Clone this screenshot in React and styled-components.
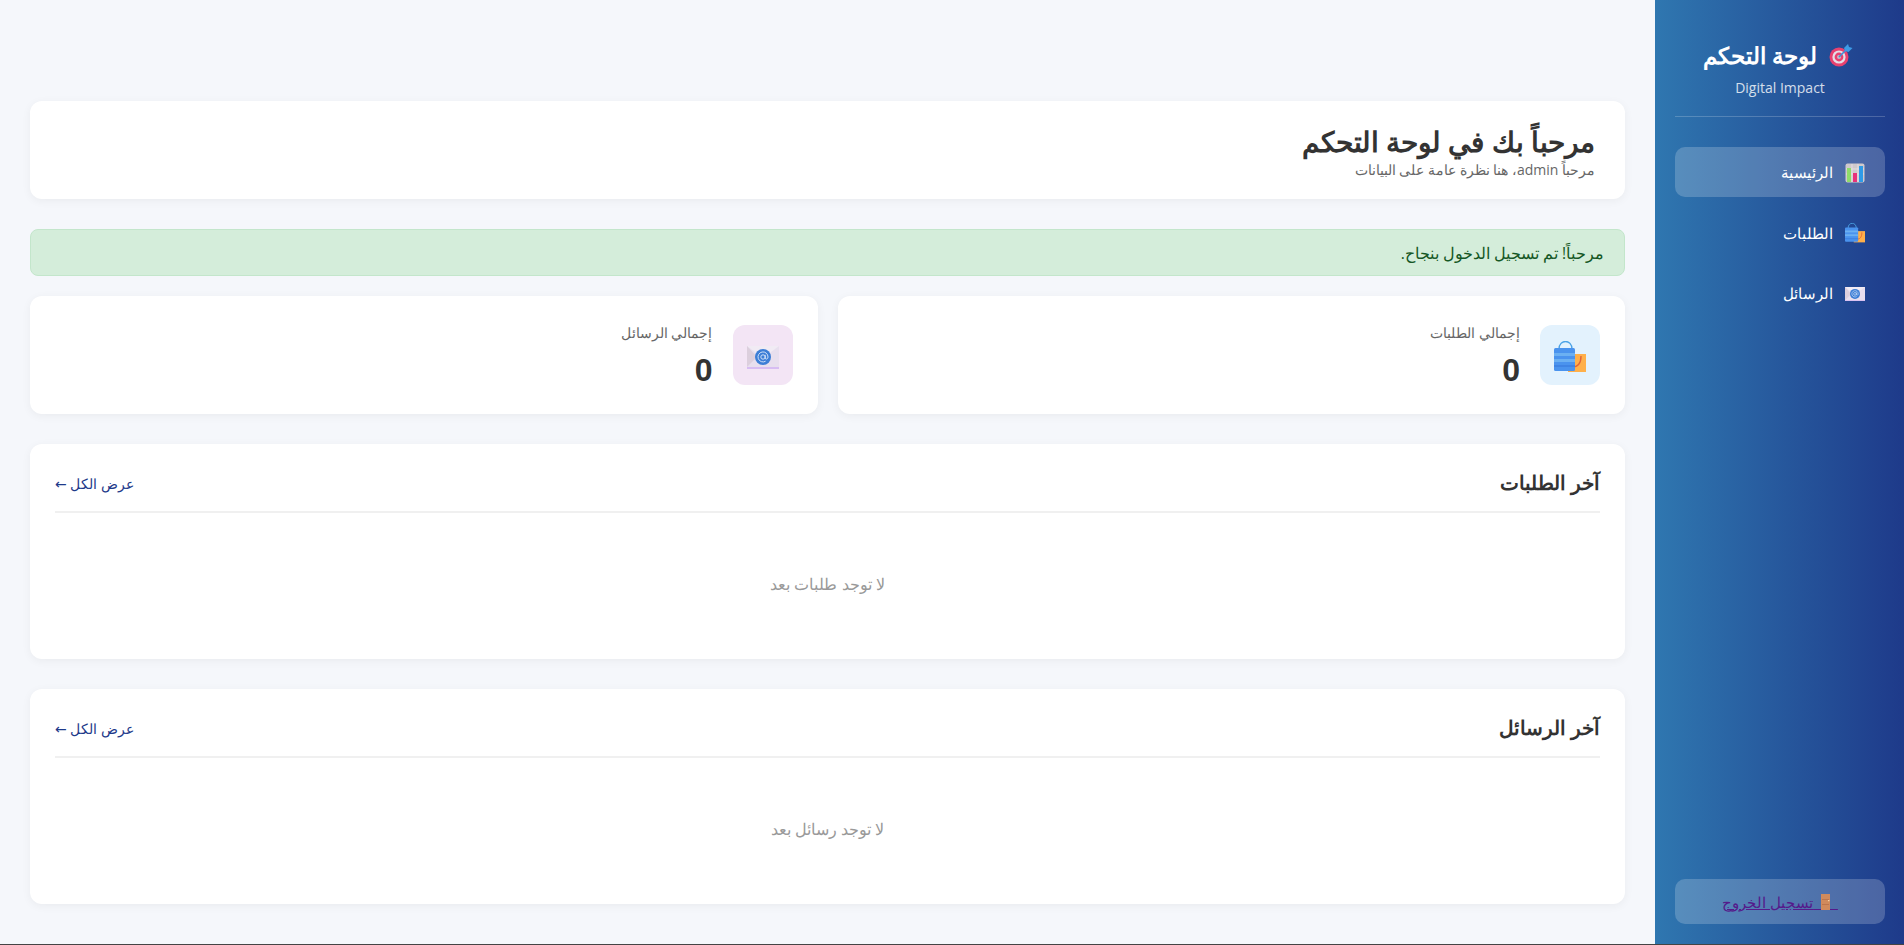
import styled, { createGlobalStyle } from "styled-components";

const GlobalStyle = createGlobalStyle`
  * {
    box-sizing: border-box;
    margin: 0;
    padding: 0;
  }
  body {
    background: #f5f7fb;
    font-family: "Open Sans", sans-serif;
    color: #333;
  }
`;

function TargetIcon({ size = 24 }) {
  return (
    <svg width={size} height={size} viewBox="0 0 24 24">
      <circle cx="10" cy="14" r="9.5" fill="#e8416f" />
      <circle cx="10" cy="14" r="6.6" fill="#e3dfe6" />
      <circle cx="10" cy="14" r="4.4" fill="#e8416f" />
      <circle cx="10" cy="14" r="2" fill="#c9b9c4" />
      <path d="M10 14 L19 5" stroke="#3d8fd8" strokeWidth="1.6" />
      <path d="M15 5 L19 1 L20 4 L23.5 5 L19.5 9 L16 8 Z" fill="#3d9be6" />
    </svg>
  );
}

function ChartIcon({ size = 20 }) {
  return (
    <svg width={size} height={size} viewBox="0 0 20 20">
      <rect x="0.5" y="0.5" width="19" height="19" rx="2" fill="#cfc9cc" />
      <path d="M7 1V19M13 1V19M1 6H19M1 11H19" stroke="#e7e4e6" strokeWidth="0.8" />
      <rect x="2" y="5" width="4" height="14" fill="#8fdc6a" />
      <rect x="8" y="10" width="4" height="9" fill="#e8327a" />
      <rect x="14" y="3" width="4" height="16" fill="#2f9be8" />
    </svg>
  );
}

function BagsIcon({ size = 20 }) {
  return (
    <svg width={size} height={size} viewBox="0 0 32 32">
      <rect x="14" y="13" width="18" height="18" fill="#ffb04a" />
      <path d="M18 26 C24 26 27 23 27 15" stroke="#e0653a" strokeWidth="1.4" fill="none" />
      <path d="M5 8 C5 -2 18 -2 18 8" stroke="#4ca3e6" strokeWidth="1.4" fill="none" />
      <rect x="0" y="7" width="21" height="23" rx="1.5" fill="#4a93ee" />
      <rect x="0" y="12" width="21" height="3" fill="#6bb0f2" />
      <rect x="0" y="18" width="21" height="3" fill="#6bb0f2" />
      <rect x="0" y="24" width="21" height="2" fill="#3f84e4" />
    </svg>
  );
}

function MailIcon({ size = 20 }) {
  return (
    <svg width={size} height={(size * 23) / 32} viewBox="0 0 32 23">
      <rect x="0" y="0" width="32" height="23" fill="#e8dfee" />
      <path d="M0 0 L16 12 L32 0 Z" fill="#f1ebf4" />
      <path d="M0 0 L10 11 L0 21 Z" fill="#dccfdd" />
      <rect x="0" y="21" width="32" height="2" fill="#d7bdf2" />
      <circle cx="16" cy="11" r="8" fill="#3c7ed6" />
      <circle cx="16" cy="11" r="2.2" fill="none" stroke="#dfeafa" strokeWidth="0.9" />
      <path
        d="M18.2 8.8 V12 C18.2 13.6 21 13.6 21 11 A5 5 0 1 0 18.6 15.2"
        fill="none"
        stroke="#dfeafa"
        strokeWidth="0.9"
      />
    </svg>
  );
}

function DoorIcon() {
  return (
    <DoorSvg width="9" height="16" viewBox="0 0 9 16">
      <rect width="9" height="16" fill="#d08a5c" />
      <path d="M1 5.5H8M1 10.5H8" stroke="#b87048" strokeWidth="0.8" />
      <rect x="7" y="6" width="1.4" height="1.2" fill="#f4d6a8" />
    </DoorSvg>
  );
}

const navItems = [
  { label: "الرئيسية", icon: <ChartIcon />, active: true },
  { label: "الطلبات", icon: <BagsIcon /> },
  { label: "الرسائل", icon: <MailIcon /> },
];

const stats = [
  { label: "إجمالي الطلبات", value: 0, icon: <BagsIcon size={32} />, tint: "#e3f2fd" },
  { label: "إجمالي الرسائل", value: 0, icon: <MailIcon size={32} />, tint: "#f3e5f5" },
];

const sections = [
  { title: "آخر الطلبات", empty: "لا توجد طلبات بعد" },
  { title: "آخر الرسائل", empty: "لا توجد رسائل بعد" },
];

export default function App() {
  return (
    <>
      <GlobalStyle />
      <Shell dir="rtl">
        <Sidebar>
          <Brand>
            <BrandTitle>
              <TargetIcon />
              <span>لوحة التحكم</span>
            </BrandTitle>
            <BrandSub>Digital Impact</BrandSub>
          </Brand>
          <Nav>
            {navItems.map((item) => (
              <NavItem key={item.label} $active={item.active}>
                <NavIcon>{item.icon}</NavIcon>
                {item.label}
              </NavItem>
            ))}
          </Nav>
          <LogoutBox>
            <LogoutLink href="#logout">
              {"\u00A0\u00A0"}
              <DoorIcon />
              {"\u00A0\u00A0"}تسجيل الخروج
            </LogoutLink>
          </LogoutBox>
        </Sidebar>
        <Main>
          <HeaderCard>
            <PageTitle>مرحباً بك في لوحة التحكم</PageTitle>
            <PageSub>مرحباً admin، هنا نظرة عامة على البيانات</PageSub>
          </HeaderCard>
          <Alert>مرحباً! تم تسجيل الدخول بنجاح.</Alert>
          <StatsGrid>
            {stats.map((s) => (
              <StatCard key={s.label}>
                <StatIcon $tint={s.tint}>{s.icon}</StatIcon>
                <StatText>
                  <StatLabel>{s.label}</StatLabel>
                  <StatValue>{s.value}</StatValue>
                </StatText>
              </StatCard>
            ))}
          </StatsGrid>
          {sections.map((s) => (
            <Section key={s.title}>
              <SectionHead>
                <SectionTitle>{s.title}</SectionTitle>
                <ViewAll>
                  عرض الكل <Arrow>←</Arrow>
                </ViewAll>
              </SectionHead>
              <Empty>{s.empty}</Empty>
            </Section>
          ))}
        </Main>
      </Shell>
      <BottomEdge />
    </>
  );
}

const Shell = styled.div`
  display: flex;
  height: 944px;
  overflow: hidden;
`;

const Sidebar = styled.aside`
  width: 249px;
  flex: none;
  display: flex;
  flex-direction: column;
  padding: 0 19px 20px 20px;
  background: linear-gradient(90deg, #2f77b0 0%, #1e3a8a 100%);
  color: #fff;
`;

const Brand = styled.div`
  height: 117px;
  padding-top: 39px;
  text-align: center;
  border-bottom: 1px solid rgba(255, 255, 255, 0.2);
`;

const BrandTitle = styled.h2`
  display: flex;
  justify-content: center;
  align-items: center;
  gap: 12px;
  height: 32px;
  padding-right: 4px;
  font-size: 23.2px;
  font-weight: 700;
`;

const BrandSub = styled.p`
  margin-top: 7px;
  font-size: 14px;
  line-height: 19px;
  opacity: 0.8;
`;

const Nav = styled.nav`
  display: flex;
  flex-direction: column;
  gap: 10.6px;
  margin-top: 30px;
`;

const NavItem = styled.div`
  display: flex;
  align-items: center;
  gap: 12px;
  height: 50px;
  padding: 0 20px;
  border-radius: 10px;
  font-size: 15.2px;
  background: ${(p) => (p.$active ? "rgba(255, 255, 255, 0.2)" : "transparent")};
`;

const NavIcon = styled.span`
  display: flex;
  justify-content: center;
  width: 20px;
  padding-top: 1px;
`;

const LogoutBox = styled.div`
  margin-top: auto;
  display: flex;
  justify-content: center;
  align-items: center;
  height: 45px;
  border-radius: 10px;
  background: rgba(255, 255, 255, 0.2);
`;

const LogoutLink = styled.a`
  color: #551a8b;
  font-size: 15.2px;
  line-height: 22px;
  text-decoration: underline;
`;

const DoorSvg = styled.svg`
  vertical-align: -2px;
`;

const Main = styled.main`
  flex: 1;
  min-width: 0;
  padding: 101px 30px 0;
`;

const Card = styled.div`
  background: #fff;
  border-radius: 12px;
  box-shadow: 0 2px 10px rgba(0, 0, 0, 0.05);
`;

const HeaderCard = styled(Card)`
  height: 98px;
  padding: 21px 30px 0;
  margin-bottom: 30px;
`;

const PageTitle = styled.h1`
  font-size: 28.2px;
  line-height: 39px;
  font-weight: 700;
  color: #333;
`;

const PageSub = styled.p`
  font-size: 14px;
  line-height: 18px;
  color: #666;
`;

const Alert = styled.div`
  height: 47px;
  padding: 0 20px;
  margin-bottom: 20px;
  display: flex;
  align-items: center;
  background: #d4edda;
  border: 1px solid #c3e6cb;
  border-radius: 8px;
  color: #155724;
  font-size: 15.5px;
`;

const StatsGrid = styled.div`
  display: grid;
  grid-template-columns: 1fr 1fr;
  gap: 20px;
  margin-bottom: 30px;
`;

const StatCard = styled(Card)`
  height: 118px;
  padding: 0 25px;
  display: flex;
  align-items: center;
  gap: 20px;
`;

const StatIcon = styled.div`
  width: 60px;
  height: 60px;
  flex: none;
  display: flex;
  align-items: center;
  justify-content: center;
  padding-top: 4px;
  border-radius: 12px;
  background: ${(p) => p.$tint};
`;

const StatText = styled.div`
  padding-top: 2px;
`;

const StatLabel = styled.div`
  font-size: 14px;
  line-height: 19px;
  color: #666;
`;

const StatValue = styled.div`
  margin-top: 10px;
  font-family: "Liberation Sans", sans-serif;
  font-size: 32px;
  line-height: 37px;
  font-weight: 700;
  color: #333;
`;

const Section = styled(Card)`
  height: 215px;
  padding: 25px;
  margin-bottom: 30px;
`;

const SectionHead = styled.div`
  display: flex;
  justify-content: space-between;
  align-items: center;
  height: 44px;
  border-bottom: 2px solid #f0f0f0;
  padding-bottom: 15px;
`;

const SectionTitle = styled.h3`
  font-size: 20px;
  font-weight: 600;
  color: #333;
`;

const ViewAll = styled.a`
  margin-top: 2px;
  color: #1e3a8a;
  font-size: 14px;
`;

const Arrow = styled.span`
  font-family: "DejaVu Sans", sans-serif;
`;

const Empty = styled.p`
  padding-top: 60px;
  text-align: center;
  color: #999;
  font-size: 16px;
  line-height: 22px;
`;

const BottomEdge = styled.div`
  height: 1px;
  background: #444;
`;
